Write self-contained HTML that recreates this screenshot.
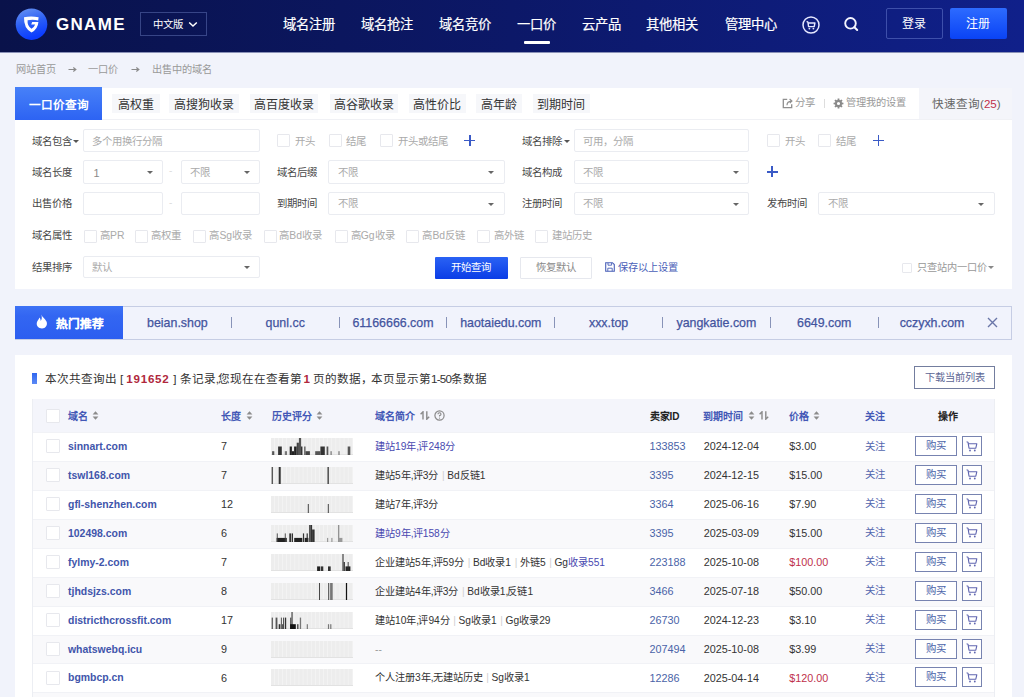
<!DOCTYPE html>
<html lang="zh-CN"><head><meta charset="utf-8"><style>*{box-sizing:border-box;margin:0;padding:0}
html,body{width:1024px;height:697px;overflow:hidden}
body{background:#f1f3fb;font-family:"Liberation Sans",sans-serif;color:#333;position:relative}
.a{position:absolute;white-space:nowrap}
.inp{position:absolute;border:1px solid #eaecf1;background:#fff;border-radius:2px}
.car{position:absolute;width:0;height:0;border-left:3px solid transparent;border-right:3px solid transparent;border-top:3px solid #777}
.cb{position:absolute;width:13px;height:13px;border:1px solid #e7e8ed;background:#fff;border-radius:1px}
.plus{position:absolute;width:11px;height:11px}
.plus:before{content:"";position:absolute;left:0;top:4.6px;width:11px;height:1.8px;background:#3a5ac6}
.plus:after{content:"";position:absolute;left:4.6px;top:0;width:1.8px;height:11px;background:#3a5ac6}
i{font-style:normal;color:#d0d0d0;margin:0 2.6px 0 3.6px}.cm{margin-right:-0.8px}</style></head><body>
<div class="a" style="left:0px;top:0px;width:1024px;height:52px;background:linear-gradient(90deg,#09124a 0%,#0c1868 50%,#10208a 100%)"></div>
<div class="a" style="left:0px;top:52px;width:1024px;height:1px;background:rgba(14,26,100,0.45)"></div>
<svg class="a" style="left:15px;top:8px" width="33" height="33" viewBox="0 0 33 33">
<defs><linearGradient id="lg" x1="0" y1="0" x2="0.3" y2="1"><stop offset="0" stop-color="#6d97f2"/><stop offset="0.55" stop-color="#2a5ef5"/><stop offset="1" stop-color="#0b3cff"/></linearGradient></defs>
<circle cx="16.5" cy="16.2" r="15.8" fill="url(#lg)"/>
<path d="M9 9.3 Q16 7.6 23.6 9.3 L23.2 12.4 Q18 11.2 12.6 12.2 Q12 17.6 16.5 20.8 Q19.6 18.6 20.2 16.6 L16.2 16.6 L17.2 14 L23.4 14 Q23 20.8 16.5 24.6 Q8.6 20.4 9 9.3 Z" fill="#fff"/>
</svg>
<div class="a" style="left:56px;top:15px;font-size:17px;font-weight:bold;color:#fff;letter-spacing:1.3px;line-height:20px">GNAME</div>
<div class="a" style="left:140px;top:12px;width:67px;height:24px;border:1px solid rgba(140,160,230,0.35)"></div>
<div class="a" style="left:153px;top:19.5px;font-size:10.4px;line-height:10.4px;color:#fff;font-weight:normal;">中文版</div>
<svg class="a" style="left:188px;top:21px" width="10" height="7" viewBox="0 0 10 7"><path d="M1.2 1.5 L5 5 L8.8 1.5" stroke="#fff" stroke-width="1.5" fill="none"/></svg>
<div class="a" style="left:283px;top:18px;font-size:13.3px;line-height:13.3px;color:#fff;font-weight:normal;-webkit-text-stroke:0.2px #fff">域名注册</div>
<div class="a" style="left:361px;top:18px;font-size:13.3px;line-height:13.3px;color:#fff;font-weight:normal;-webkit-text-stroke:0.2px #fff">域名抢注</div>
<div class="a" style="left:439px;top:18px;font-size:13.3px;line-height:13.3px;color:#fff;font-weight:normal;-webkit-text-stroke:0.2px #fff">域名竞价</div>
<div class="a" style="left:516.5px;top:18px;font-size:13.3px;line-height:13.3px;color:#fff;font-weight:normal;-webkit-text-stroke:0.2px #fff">一口价</div>
<div class="a" style="left:581.7px;top:18px;font-size:13.3px;line-height:13.3px;color:#fff;font-weight:normal;-webkit-text-stroke:0.2px #fff">云产品</div>
<div class="a" style="left:646px;top:18px;font-size:13.3px;line-height:13.3px;color:#fff;font-weight:normal;-webkit-text-stroke:0.2px #fff">其他相关</div>
<div class="a" style="left:724.7px;top:18px;font-size:13.3px;line-height:13.3px;color:#fff;font-weight:normal;-webkit-text-stroke:0.2px #fff">管理中心</div>
<div class="a" style="left:524px;top:41px;width:26px;height:3px;background:#fff;border-radius:1px"></div>
<svg class="a" style="left:801px;top:15px" width="20" height="20" viewBox="0 0 20 20"><circle cx="10" cy="10" r="8" stroke="#e6e8ff" stroke-width="1.5" fill="none"/><path d="M5.6 6.4 L6.9 7.2 L7.6 11.6 H13.2 L13.9 8 H7.2" stroke="#e6e8ff" stroke-width="1.4" fill="none" stroke-linejoin="round"/><circle cx="8.4" cy="13.6" r="0.9" fill="#e6e8ff"/><circle cx="12.4" cy="13.6" r="0.9" fill="#e6e8ff"/></svg>
<svg class="a" style="left:843px;top:16px" width="18" height="18" viewBox="0 0 18 18"><circle cx="7.5" cy="7.3" r="5.3" stroke="#f4f5ff" stroke-width="1.9" fill="none"/><path d="M11.4 11.2 L14.2 14" stroke="#f4f5ff" stroke-width="2" stroke-linecap="round"/></svg>
<div class="a" style="left:886px;top:8px;width:57px;height:31px;border:1px solid rgba(120,140,220,0.45);border-radius:2px"></div>
<div class="a" style="left:902px;top:18px;font-size:12px;line-height:12px;color:#fff;font-weight:normal;">登录</div>
<div class="a" style="left:950px;top:8px;width:57px;height:31px;background:linear-gradient(180deg,#2d6bff,#0a43f5);border-radius:2px"></div>
<div class="a" style="left:966px;top:18px;font-size:12px;line-height:12px;color:#fff;font-weight:normal;">注册</div>
<div class="a" style="left:15.5px;top:65px;font-size:10.2px;line-height:10.2px;color:#999;font-weight:normal;">网站首页</div>
<svg class="a" style="left:68px;top:66px" width="9" height="7" viewBox="0 0 9 7"><path d="M0.5 3.5 H7.5 M5.3 1.6 L7.8 3.5 L5.3 5.4" stroke="#8a8a8a" stroke-width="1.2" fill="none"/></svg>
<div class="a" style="left:88px;top:65px;font-size:10.2px;line-height:10.2px;color:#999;font-weight:normal;">一口价</div>
<svg class="a" style="left:131px;top:66px" width="9" height="7" viewBox="0 0 9 7"><path d="M0.5 3.5 H7.5 M5.3 1.6 L7.8 3.5 L5.3 5.4" stroke="#8a8a8a" stroke-width="1.2" fill="none"/></svg>
<div class="a" style="left:151.5px;top:65px;font-size:10.2px;line-height:10.2px;color:#999;font-weight:normal;">出售中的域名</div>
<div class="a" style="left:15px;top:88px;width:997px;height:201px;background:#fff"></div>
<div class="a" style="left:15px;top:119px;width:997px;height:1px;background:#f0f1f5"></div>
<div class="a" style="left:15px;top:87px;width:87px;height:33px;background:linear-gradient(180deg,#4781f8,#2d63f3)"></div>
<div class="a" style="left:29.3px;top:99px;font-size:11.6px;line-height:11.6px;color:#fff;font-weight:bold;">一口价查询</div>
<div class="a" style="left:112px;top:94px;width:48px;height:19px;background:#f6f7fa"></div>
<div class="a" style="left:118.0px;top:98.5px;font-size:12px;line-height:12px;color:#333;font-weight:normal;">高权重</div>
<div class="a" style="left:169px;top:94px;width:70px;height:19px;background:#f6f7fa"></div>
<div class="a" style="left:174.0px;top:98.5px;font-size:12px;line-height:12px;color:#333;font-weight:normal;">高搜狗收录</div>
<div class="a" style="left:250px;top:94px;width:68px;height:19px;background:#f6f7fa"></div>
<div class="a" style="left:254.0px;top:98.5px;font-size:12px;line-height:12px;color:#333;font-weight:normal;">高百度收录</div>
<div class="a" style="left:330px;top:94px;width:68px;height:19px;background:#f6f7fa"></div>
<div class="a" style="left:334.0px;top:98.5px;font-size:12px;line-height:12px;color:#333;font-weight:normal;">高谷歌收录</div>
<div class="a" style="left:408.6px;top:94px;width:57.39999999999998px;height:19px;background:#f6f7fa"></div>
<div class="a" style="left:413.3px;top:98.5px;font-size:12px;line-height:12px;color:#333;font-weight:normal;">高性价比</div>
<div class="a" style="left:476.4px;top:94px;width:45.60000000000002px;height:19px;background:#f6f7fa"></div>
<div class="a" style="left:481.2px;top:98.5px;font-size:12px;line-height:12px;color:#333;font-weight:normal;">高年龄</div>
<div class="a" style="left:532.6px;top:94px;width:57.39999999999998px;height:19px;background:#f6f7fa"></div>
<div class="a" style="left:537.3px;top:98.5px;font-size:12px;line-height:12px;color:#333;font-weight:normal;">到期时间</div>
<svg class="a" style="left:781.5px;top:97.5px" width="12" height="11" viewBox="0 0 12 11"><path d="M5.2 1.3 H1.3 V9.7 H9.7 V6.2" stroke="#8f8f8f" stroke-width="1.3" fill="none"/><path d="M5 7.2 Q5 3.3 9.6 3.1 M7.6 1 L9.9 3.1 L7.8 5.2" stroke="#8f8f8f" stroke-width="1.2" fill="none"/></svg>
<div class="a" style="left:795px;top:98px;font-size:10.4px;line-height:10.4px;color:#999;font-weight:normal;">分享</div>
<div class="a" style="left:824px;top:99px;width:1px;height:9px;background:#ddd"></div>
<svg class="a" style="left:833px;top:97.5px" width="11" height="11" viewBox="0 0 11 11"><path d="M8.96 4.51 L10.43 4.65 L10.43 6.35 L8.96 6.49 L8.65 7.24 L9.58 8.39 L8.39 9.58 L7.24 8.65 L6.49 8.96 L6.35 10.43 L4.65 10.43 L4.51 8.96 L3.76 8.65 L2.61 9.58 L1.42 8.39 L2.35 7.24 L2.04 6.49 L0.57 6.35 L0.57 4.65 L2.04 4.51 L2.35 3.76 L1.42 2.61 L2.61 1.42 L3.76 2.35 L4.51 2.04 L4.65 0.57 L6.35 0.57 L6.49 2.04 L7.24 2.35 L8.39 1.42 L9.58 2.61 L8.65 3.76 Z M5.5 3.9 A1.6 1.6 0 1 0 5.5 7.1 A1.6 1.6 0 1 0 5.5 3.9 Z" fill="#8a8a8a" fill-rule="evenodd"/></svg>
<div class="a" style="left:846.4px;top:98px;font-size:10.2px;line-height:10.2px;color:#999;font-weight:normal;">管理我的设置</div>
<div class="a" style="left:919px;top:88px;width:93px;height:31px;background:#f4f5fa"></div>
<div class="a" style="left:932px;top:98px;font-size:11.6px;line-height:11.6px;color:#666">快速查询(<span style="color:#c0304a">25</span>)</div>
<div class="a" style="left:32.4px;top:136.5px;font-size:10.4px;line-height:10.4px;color:#484848;font-weight:normal;">域名包含</div>
<div class="car" style="left:73px;top:140px;border-top-color:#555"></div>
<div class="inp" style="left:83px;top:129px;width:177px;height:23px"></div>
<div class="a" style="left:92px;top:136.5px;font-size:10.4px;line-height:10.4px;color:#aaa;font-weight:normal;">多个用换行分隔</div>
<div class="cb" style="left:277px;top:134px;width:13px;height:13px"></div>
<div class="a" style="left:295px;top:136.5px;font-size:10.4px;line-height:10.4px;color:#aaa;font-weight:normal;">开头</div>
<div class="cb" style="left:328.5px;top:134px;width:13px;height:13px"></div>
<div class="a" style="left:346.3px;top:136.5px;font-size:10.4px;line-height:10.4px;color:#aaa;font-weight:normal;">结尾</div>
<div class="cb" style="left:380px;top:134px;width:13px;height:13px"></div>
<div class="a" style="left:397.8px;top:136.5px;font-size:10.4px;line-height:10.4px;color:#aaa;font-weight:normal;">开头或结尾</div>
<div class="plus" style="left:464.3px;top:135px"></div>
<div class="a" style="left:522px;top:136.5px;font-size:10.4px;line-height:10.4px;color:#484848;font-weight:normal;">域名排除</div>
<div class="car" style="left:563.5px;top:140px;border-top-color:#555"></div>
<div class="inp" style="left:573.5px;top:129px;width:175.5px;height:23px"></div>
<div class="a" style="left:583px;top:136.5px;font-size:10.4px;line-height:10.4px;color:#aaa;font-weight:normal;">可用，分隔</div>
<div class="cb" style="left:766.5px;top:134px;width:13px;height:13px"></div>
<div class="a" style="left:784.8px;top:136.5px;font-size:10.4px;line-height:10.4px;color:#aaa;font-weight:normal;">开头</div>
<div class="cb" style="left:818px;top:134px;width:13px;height:13px"></div>
<div class="a" style="left:835.6px;top:136.5px;font-size:10.4px;line-height:10.4px;color:#aaa;font-weight:normal;">结尾</div>
<div class="plus" style="left:873px;top:135px"></div>
<div class="a" style="left:32.4px;top:167.5px;font-size:10.4px;line-height:10.4px;color:#484848;font-weight:normal;">域名长度</div>
<div class="inp" style="left:83px;top:160px;width:79.5px;height:23.5px"></div>
<div class="a" style="left:93.4px;top:167.5px;font-size:10.8px;line-height:10.8px;color:#888;font-weight:normal;">1</div>
<div class="car" style="left:146.5px;top:171px;border-top-color:#666"></div>
<div class="a" style="left:169px;top:166px;font-size:10px;line-height:10px;color:#ddd;font-weight:normal;">-</div>
<div class="inp" style="left:180.5px;top:160px;width:79.5px;height:23.5px"></div>
<div class="a" style="left:190px;top:167.5px;font-size:10.4px;line-height:10.4px;color:#aaa;font-weight:normal;">不限</div>
<div class="car" style="left:243.5px;top:171px;border-top-color:#666"></div>
<div class="a" style="left:277.3px;top:167.5px;font-size:10.4px;line-height:10.4px;color:#484848;font-weight:normal;">域名后缀</div>
<div class="inp" style="left:328px;top:160px;width:177px;height:23.5px"></div>
<div class="a" style="left:338px;top:167.5px;font-size:10.4px;line-height:10.4px;color:#aaa;font-weight:normal;">不限</div>
<div class="car" style="left:488px;top:171px;border-top-color:#666"></div>
<div class="a" style="left:522px;top:167.5px;font-size:10.4px;line-height:10.4px;color:#484848;font-weight:normal;">域名构成</div>
<div class="inp" style="left:573.5px;top:160px;width:175.5px;height:23.5px"></div>
<div class="a" style="left:583px;top:167.5px;font-size:10.4px;line-height:10.4px;color:#aaa;font-weight:normal;">不限</div>
<div class="car" style="left:732.5px;top:171px;border-top-color:#666"></div>
<div class="plus" style="left:766.6px;top:166.3px"></div>
<div class="a" style="left:32.4px;top:199px;font-size:10.4px;line-height:10.4px;color:#484848;font-weight:normal;">出售价格</div>
<div class="inp" style="left:83px;top:192px;width:79.5px;height:23.19999999999999px"></div>
<div class="a" style="left:169px;top:198px;font-size:10px;line-height:10px;color:#ddd;font-weight:normal;">-</div>
<div class="inp" style="left:180.5px;top:192px;width:79.5px;height:23.19999999999999px"></div>
<div class="a" style="left:277.3px;top:199px;font-size:10.4px;line-height:10.4px;color:#484848;font-weight:normal;">到期时间</div>
<div class="inp" style="left:328px;top:192px;width:177px;height:23.19999999999999px"></div>
<div class="a" style="left:338px;top:199px;font-size:10.4px;line-height:10.4px;color:#aaa;font-weight:normal;">不限</div>
<div class="car" style="left:488px;top:202.5px;border-top-color:#666"></div>
<div class="a" style="left:522px;top:199px;font-size:10.4px;line-height:10.4px;color:#484848;font-weight:normal;">注册时间</div>
<div class="inp" style="left:573.5px;top:192px;width:175.5px;height:23.19999999999999px"></div>
<div class="a" style="left:583px;top:199px;font-size:10.4px;line-height:10.4px;color:#aaa;font-weight:normal;">不限</div>
<div class="car" style="left:732.5px;top:202.5px;border-top-color:#666"></div>
<div class="a" style="left:766.6px;top:199px;font-size:10.4px;line-height:10.4px;color:#484848;font-weight:normal;">发布时间</div>
<div class="inp" style="left:818px;top:192px;width:177px;height:23.19999999999999px"></div>
<div class="a" style="left:828px;top:199px;font-size:10.4px;line-height:10.4px;color:#aaa;font-weight:normal;">不限</div>
<div class="car" style="left:977.5px;top:202.5px;border-top-color:#666"></div>
<div class="a" style="left:32.4px;top:231.2px;font-size:10.4px;line-height:10.4px;color:#484848;font-weight:normal;">域名属性</div>
<div class="cb" style="left:84px;top:229.6px;width:13px;height:13px"></div>
<div class="a" style="left:100px;top:231.2px;font-size:10.4px;line-height:10.4px;color:#aaa;font-weight:normal;">高PR</div>
<div class="cb" style="left:134.7px;top:229.6px;width:13px;height:13px"></div>
<div class="a" style="left:150.8px;top:231.2px;font-size:10.4px;line-height:10.4px;color:#aaa;font-weight:normal;">高权重</div>
<div class="cb" style="left:192.7px;top:229.6px;width:13px;height:13px"></div>
<div class="a" style="left:209.4px;top:231.2px;font-size:10.4px;line-height:10.4px;color:#aaa;font-weight:normal;">高Sg收录</div>
<div class="cb" style="left:263.6px;top:229.6px;width:13px;height:13px"></div>
<div class="a" style="left:279.3px;top:231.2px;font-size:10.4px;line-height:10.4px;color:#aaa;font-weight:normal;">高Bd收录</div>
<div class="cb" style="left:334.5px;top:229.6px;width:13px;height:13px"></div>
<div class="a" style="left:350.7px;top:231.2px;font-size:10.4px;line-height:10.4px;color:#aaa;font-weight:normal;">高Gg收录</div>
<div class="cb" style="left:406px;top:229.6px;width:13px;height:13px"></div>
<div class="a" style="left:422.4px;top:231.2px;font-size:10.4px;line-height:10.4px;color:#aaa;font-weight:normal;">高Bd反链</div>
<div class="cb" style="left:477.3px;top:229.6px;width:13px;height:13px"></div>
<div class="a" style="left:493.8px;top:231.2px;font-size:10.4px;line-height:10.4px;color:#aaa;font-weight:normal;">高外链</div>
<div class="cb" style="left:535.3px;top:229.6px;width:13px;height:13px"></div>
<div class="a" style="left:551.8px;top:231.2px;font-size:10.4px;line-height:10.4px;color:#aaa;font-weight:normal;">建站历史</div>
<div class="a" style="left:32.4px;top:262.5px;font-size:10.4px;line-height:10.4px;color:#484848;font-weight:normal;">结果排序</div>
<div class="inp" style="left:83px;top:256px;width:177px;height:22px"></div>
<div class="a" style="left:92px;top:263px;font-size:10.4px;line-height:10.4px;color:#aaa;font-weight:normal;">默认</div>
<div class="car" style="left:244px;top:266px;border-top-color:#666"></div>
<div class="a" style="left:434.7px;top:256.5px;width:73.30000000000001px;height:22.5px;background:linear-gradient(180deg,#2a62f4,#0b3de6);border-radius:1px"></div>
<div class="a" style="left:451px;top:262.5px;font-size:10.4px;line-height:10.4px;color:#fff;font-weight:normal;">开始查询</div>
<div class="a" style="left:519.5px;top:256.5px;width:72.79999999999995px;height:22.5px;border:1px solid #e6e8ee;background:#fff;border-radius:1px"></div>
<div class="a" style="left:535.5px;top:262.5px;font-size:10.4px;line-height:10.4px;color:#888;font-weight:normal;">恢复默认</div>
<svg class="a" style="left:604.5px;top:262px" width="10" height="10" viewBox="0 0 10 10"><path d="M0.7 0.7 H7.4 L9.3 2.6 V9.3 H0.7 Z" stroke="#4a60b8" stroke-width="1.1" fill="none"/><path d="M3 1 V3.2 H6.6 V1 M2.8 9.2 V6.2 H7.2 V9.2" stroke="#4a60b8" stroke-width="0.9" fill="none"/></svg>
<div class="a" style="left:617.5px;top:262.5px;font-size:10.2px;line-height:10.2px;color:#4a60b8;font-weight:normal;">保存以上设置</div>
<div class="cb" style="left:902.3px;top:262.5px;width:10px;height:10px"></div>
<div class="a" style="left:917px;top:262.5px;font-size:10.2px;line-height:10.2px;color:#999;font-weight:normal;">只查站内一口价</div>
<div class="car" style="left:988px;top:266px;border-top-color:#888"></div>
<div class="a" style="left:15px;top:306px;width:997px;height:34px;background:#f1f3fc;border:1px solid #c6cde4"></div>
<div class="a" style="left:15px;top:306px;width:108px;height:33px;background:linear-gradient(180deg,#3d72f5 0%,#3366f2 30%,#2c5ef0 100%)"></div>
<svg class="a" style="left:36px;top:314px" width="12" height="15" viewBox="0 0 12 15"><path d="M5.2 0.5 C6 3 9 4.5 10.5 7.5 C12 11 9.5 14.5 6 14.5 C2.5 14.5 0.3 12 0.8 8.8 C1.2 6.5 3 5.5 3.5 3.5 C4.5 5 4.8 6 4.6 7 C6 5.5 6.2 3 5.2 0.5 Z" fill="#fff"/></svg>
<div class="a" style="left:56.4px;top:317.5px;font-size:11.6px;line-height:11.6px;color:#fff;font-weight:bold;-webkit-text-stroke:0.2px #fff">热门推荐</div>
<div class="a" style="left:123.5px;top:316px;width:107.8px;text-align:center;font-size:12.4px;line-height:14px;color:#43549e;-webkit-text-stroke:0.25px #43549e">beian.shop</div>
<div class="a" style="left:230.8px;top:317px;width:1.0px;height:11px;background:#8893b8"></div>
<div class="a" style="left:231.3px;top:316px;width:107.8px;text-align:center;font-size:12.4px;line-height:14px;color:#43549e;-webkit-text-stroke:0.25px #43549e">qunl.cc</div>
<div class="a" style="left:338.6px;top:317px;width:1.0px;height:11px;background:#8893b8"></div>
<div class="a" style="left:339.1px;top:316px;width:107.8px;text-align:center;font-size:12.4px;line-height:14px;color:#43549e;-webkit-text-stroke:0.25px #43549e">61166666.com</div>
<div class="a" style="left:446.4px;top:317px;width:1.0px;height:11px;background:#8893b8"></div>
<div class="a" style="left:446.9px;top:316px;width:107.8px;text-align:center;font-size:12.4px;line-height:14px;color:#43549e;-webkit-text-stroke:0.25px #43549e">haotaiedu.com</div>
<div class="a" style="left:554.2px;top:317px;width:1.0px;height:11px;background:#8893b8"></div>
<div class="a" style="left:554.7px;top:316px;width:107.8px;text-align:center;font-size:12.4px;line-height:14px;color:#43549e;-webkit-text-stroke:0.25px #43549e">xxx.top</div>
<div class="a" style="left:662.0px;top:317px;width:1.0px;height:11px;background:#8893b8"></div>
<div class="a" style="left:662.5px;top:316px;width:107.8px;text-align:center;font-size:12.4px;line-height:14px;color:#43549e;-webkit-text-stroke:0.25px #43549e">yangkatie.com</div>
<div class="a" style="left:769.8px;top:317px;width:1.0px;height:11px;background:#8893b8"></div>
<div class="a" style="left:770.3px;top:316px;width:107.8px;text-align:center;font-size:12.4px;line-height:14px;color:#43549e;-webkit-text-stroke:0.25px #43549e">6649.com</div>
<div class="a" style="left:877.6px;top:317px;width:1.0px;height:11px;background:#8893b8"></div>
<div class="a" style="left:878.1px;top:316px;width:107.8px;text-align:center;font-size:12.4px;line-height:14px;color:#43549e;-webkit-text-stroke:0.25px #43549e">cczyxh.com</div>
<svg class="a" style="left:987px;top:317px" width="11" height="11" viewBox="0 0 11 11"><path d="M1 1 L10 10 M10 1 L1 10" stroke="#6a76a8" stroke-width="1.4"/></svg>
<div class="a" style="left:15px;top:355px;width:997px;height:342px;background:#fff"></div>
<div class="a" style="left:32px;top:373px;width:4.600000000000001px;height:11px;background:linear-gradient(180deg,#2f66f0,#5c8af5)"></div>
<div class="a" style="left:45.4px;top:372.5px;font-size:11.6px;line-height:11.6px;color:#333;font-weight:normal;">本次共查询出</div>
<div class="a" style="left:120px;top:372.5px;font-size:11.6px;line-height:11.6px;color:#333;font-weight:normal;">[</div>
<div class="a" style="left:126.3px;top:372.5px;font-size:11.6px;line-height:11.6px;color:#b0283c;font-weight:bold;letter-spacing:0.75px">191652</div>
<div class="a" style="left:173.2px;top:372.5px;font-size:11.6px;line-height:11.6px;color:#333;font-weight:normal;">]</div>
<div class="a" style="left:179.7px;top:372.5px;font-size:11.6px;line-height:11.6px;color:#333;font-weight:normal;">条记录<span style="margin-right:-0.9px">,</span>您现在在查看第</div>
<div class="a" style="left:303.4px;top:372.5px;font-size:11.6px;line-height:11.6px;color:#b0283c;font-weight:bold;">1</div>
<div class="a" style="left:313.4px;top:372.5px;font-size:11.6px;line-height:11.6px;color:#333;font-weight:normal;">页的数据<span style="margin-right:-2.5px">，</span>本页显示第<span style="letter-spacing:-0.7px">1-50</span>条数据</div>
<div class="a" style="left:914px;top:366px;width:81px;height:22.5px;border:1px solid #737d9e;background:#fff"></div>
<div class="a" style="left:925px;top:372.8px;font-size:10.2px;line-height:10.2px;color:#5b6594;font-weight:normal;">下载当前列表</div>
<div class="a" style="left:32px;top:399px;width:963px;height:33px;background:#f4f5fb"></div>
<div class="cb" style="left:45.6px;top:408.5px;width:14px;height:14px"></div>
<div class="a" style="left:67.6px;top:411.6px;font-size:10px;line-height:10px;color:#4358b6;font-weight:bold;">域名</div>
<svg class="a" style="left:92px;top:411px" width="7" height="9" viewBox="0 0 7 9"><path d="M3.5 0.3 L6.4 3.4 H0.6 Z M3.5 8.7 L6.4 5.6 H0.6 Z" fill="#8c8c8c"/></svg>
<div class="a" style="left:221.2px;top:411.6px;font-size:10px;line-height:10px;color:#4358b6;font-weight:bold;">长度</div>
<svg class="a" style="left:245.5px;top:411px" width="7" height="9" viewBox="0 0 7 9"><path d="M3.5 0.3 L6.4 3.4 H0.6 Z M3.5 8.7 L6.4 5.6 H0.6 Z" fill="#8c8c8c"/></svg>
<div class="a" style="left:271.7px;top:411.6px;font-size:10px;line-height:10px;color:#4358b6;font-weight:bold;">历史评分</div>
<svg class="a" style="left:316px;top:411px" width="7" height="9" viewBox="0 0 7 9"><path d="M3.5 0.3 L6.4 3.4 H0.6 Z M3.5 8.7 L6.4 5.6 H0.6 Z" fill="#8c8c8c"/></svg>
<div class="a" style="left:375px;top:411.6px;font-size:10px;line-height:10px;color:#4358b6;font-weight:bold;">域名简介</div>
<svg class="a" style="left:419.5px;top:411px" width="10" height="9" viewBox="0 0 10 9"><path d="M3 8.5 V0.8 L0.6 3.2 M6.8 0.3 V8.2 L9.2 5.8" stroke="#8a8a8a" stroke-width="1.4" fill="none"/></svg>
<svg class="a" style="left:434px;top:410px" width="11" height="11" viewBox="0 0 11 11"><circle cx="5.5" cy="5.5" r="4.6" stroke="#8a8a8a" stroke-width="1.2" fill="none"/><path d="M4 4.3 Q4 2.8 5.5 2.8 Q7 2.8 7 4.2 Q7 5.2 5.5 5.6 V6.6" stroke="#8a8a8a" stroke-width="1.1" fill="none"/><circle cx="5.5" cy="8.1" r="0.7" fill="#8a8a8a"/></svg>
<div class="a" style="left:649.6px;top:411.6px;font-size:10px;line-height:10px;color:#222;font-weight:bold;">卖家ID</div>
<div class="a" style="left:702.8px;top:411.6px;font-size:10px;line-height:10px;color:#4358b6;font-weight:bold;">到期时间</div>
<svg class="a" style="left:747.5px;top:411px" width="7" height="9" viewBox="0 0 7 9"><path d="M3.5 0.3 L6.4 3.4 H0.6 Z M3.5 8.7 L6.4 5.6 H0.6 Z" fill="#8c8c8c"/></svg>
<svg class="a" style="left:759px;top:411px" width="10" height="9" viewBox="0 0 10 9"><path d="M3 8.5 V0.8 L0.6 3.2 M6.8 0.3 V8.2 L9.2 5.8" stroke="#8a8a8a" stroke-width="1.4" fill="none"/></svg>
<div class="a" style="left:788.8px;top:411.6px;font-size:10px;line-height:10px;color:#4358b6;font-weight:bold;">价格</div>
<svg class="a" style="left:812.5px;top:411px" width="7" height="9" viewBox="0 0 7 9"><path d="M3.5 0.3 L6.4 3.4 H0.6 Z M3.5 8.7 L6.4 5.6 H0.6 Z" fill="#8c8c8c"/></svg>
<div class="a" style="left:865.4px;top:411.6px;font-size:10px;line-height:10px;color:#4358b6;font-weight:bold;">关注</div>
<div class="a" style="left:937.5px;top:411.6px;font-size:10px;line-height:10px;color:#222;font-weight:bold;">操作</div>
<div class="a" style="left:32px;top:432.0px;width:963px;height:29.0px;background:#fff;border-top:1px solid #f1f2f6"></div>
<div class="cb" style="left:45.6px;top:439.2px;width:14px;height:14px"></div>
<div class="a" style="left:68px;top:442.0px;font-size:10.45px;line-height:10.45px;color:#4155ab;font-weight:bold;">sinnart.com</div>
<div class="a" style="left:221px;top:441.2px;font-size:10.8px;line-height:10.8px;color:#333;font-weight:normal;">7</div>
<svg class="a" style="left:271.2px;top:438.0px" width="82" height="17" viewBox="0 0 82 17"><rect x="0" y="0" width="82" height="17" fill="#ededed"/><rect x="3.0" y="0" width="0.7" height="17" fill="#f5f5f5"/><rect x="7.1" y="0" width="0.7" height="17" fill="#f5f5f5"/><rect x="11.2" y="0" width="0.7" height="17" fill="#f5f5f5"/><rect x="15.299999999999999" y="0" width="0.7" height="17" fill="#f5f5f5"/><rect x="19.4" y="0" width="0.7" height="17" fill="#f5f5f5"/><rect x="23.5" y="0" width="0.7" height="17" fill="#f5f5f5"/><rect x="27.599999999999998" y="0" width="0.7" height="17" fill="#f5f5f5"/><rect x="31.699999999999996" y="0" width="0.7" height="17" fill="#f5f5f5"/><rect x="35.8" y="0" width="0.7" height="17" fill="#f5f5f5"/><rect x="39.9" y="0" width="0.7" height="17" fill="#f5f5f5"/><rect x="44.0" y="0" width="0.7" height="17" fill="#f5f5f5"/><rect x="48.099999999999994" y="0" width="0.7" height="17" fill="#f5f5f5"/><rect x="52.199999999999996" y="0" width="0.7" height="17" fill="#f5f5f5"/><rect x="56.3" y="0" width="0.7" height="17" fill="#f5f5f5"/><rect x="60.39999999999999" y="0" width="0.7" height="17" fill="#f5f5f5"/><rect x="64.5" y="0" width="0.7" height="17" fill="#f5f5f5"/><rect x="68.6" y="0" width="0.7" height="17" fill="#f5f5f5"/><rect x="72.69999999999999" y="0" width="0.7" height="17" fill="#f5f5f5"/><rect x="76.8" y="0" width="0.7" height="17" fill="#f5f5f5"/><rect x="80.89999999999999" y="0" width="0.7" height="17" fill="#f5f5f5"/><rect x="0" y="16" width="82" height="1" fill="#e2e2e2"/><rect x="1.1" y="13.2" width="2.2" height="3.8" fill="#555"/><rect x="7.1" y="8.5" width="3.7" height="8.5" fill="#333"/><rect x="13.8" y="13.2" width="2.2" height="3.8" fill="#777"/><rect x="18.7" y="8.5" width="2.2" height="8.5" fill="#222"/><rect x="20.9" y="13.2" width="2.2" height="3.8" fill="#222"/><rect x="23.1" y="8.5" width="2.6" height="8.5" fill="#222"/><rect x="25.7" y="4.699999999999999" width="2.2" height="12.3" fill="#444"/><rect x="27.9" y="0" width="2.2" height="17" fill="#555"/><rect x="30.1" y="8.5" width="1.3" height="8.5" fill="#222"/><rect x="33.2" y="8.5" width="1.3" height="8.5" fill="#555"/><rect x="34.5" y="13.2" width="4.4" height="3.8" fill="#444"/><rect x="44.2" y="13.2" width="5.2" height="3.8" fill="#555"/><rect x="49.4" y="8.5" width="4.4" height="8.5" fill="#333"/><rect x="55.6" y="8.5" width="1.7" height="8.5" fill="#555"/><rect x="59.5" y="13.2" width="1.2" height="3.8" fill="#777"/><rect x="67.4" y="13.2" width="1.2" height="3.8" fill="#777"/><rect x="76.7" y="8.5" width="2.6" height="8.5" fill="#555"/></svg>
<div class="a" style="left:375px;top:442.0px;font-size:10.2px;line-height:10.2px;color:#333"><span style="color:#4848b0">建站19年<span class="cm">,</span>评248分</span></div>
<div class="a" style="left:649.4px;top:441.2px;font-size:10.8px;line-height:10.8px;color:#4a63a8;font-weight:normal;">133853</div>
<div class="a" style="left:703.7px;top:441.2px;font-size:10.8px;line-height:10.8px;color:#333;font-weight:normal;">2024-12-04</div>
<div class="a" style="left:789.2px;top:441.2px;font-size:10.8px;line-height:10.8px;color:#333;font-weight:normal;">$3.00</div>
<div class="a" style="left:865px;top:441.5px;font-size:10.4px;line-height:10.4px;color:#5266ae;font-weight:normal;">关注</div>
<div class="a" style="left:915px;top:436.0px;width:42px;height:20.0px;border:1px solid #7783b0;background:#fff"></div>
<div class="a" style="left:926px;top:441.0px;font-size:10.4px;line-height:10.4px;color:#4a63a8;font-weight:normal;">购买</div>
<div class="a" style="left:962px;top:436.0px;width:20px;height:20.0px;border:1px solid #7783b0;background:#fff"></div>
<svg class="a" style="left:966px;top:440.5px" width="12" height="11" viewBox="0 0 12 11"><path d="M0.6 0.8 L2 1.2 L3 7.2 H9.8 L10.8 2.8 H2.6" stroke="#6066b0" stroke-width="1.1" fill="none" stroke-linejoin="round"/><circle cx="4" cy="9.5" r="0.9" fill="#6066b0"/><circle cx="8.8" cy="9.5" r="0.9" fill="#6066b0"/></svg>
<div class="a" style="left:32px;top:460.93px;width:963px;height:29.0px;background:#f9f9fb;border-top:1px solid #f1f2f6"></div>
<div class="cb" style="left:45.6px;top:468.13px;width:14px;height:14px"></div>
<div class="a" style="left:68px;top:470.93px;font-size:10.45px;line-height:10.45px;color:#4155ab;font-weight:bold;">tswl168.com</div>
<div class="a" style="left:221px;top:470.13px;font-size:10.8px;line-height:10.8px;color:#333;font-weight:normal;">7</div>
<svg class="a" style="left:271.2px;top:466.93px" width="82" height="17" viewBox="0 0 82 17"><rect x="0" y="0" width="82" height="17" fill="#ededed"/><rect x="3.0" y="0" width="0.7" height="17" fill="#f5f5f5"/><rect x="7.1" y="0" width="0.7" height="17" fill="#f5f5f5"/><rect x="11.2" y="0" width="0.7" height="17" fill="#f5f5f5"/><rect x="15.299999999999999" y="0" width="0.7" height="17" fill="#f5f5f5"/><rect x="19.4" y="0" width="0.7" height="17" fill="#f5f5f5"/><rect x="23.5" y="0" width="0.7" height="17" fill="#f5f5f5"/><rect x="27.599999999999998" y="0" width="0.7" height="17" fill="#f5f5f5"/><rect x="31.699999999999996" y="0" width="0.7" height="17" fill="#f5f5f5"/><rect x="35.8" y="0" width="0.7" height="17" fill="#f5f5f5"/><rect x="39.9" y="0" width="0.7" height="17" fill="#f5f5f5"/><rect x="44.0" y="0" width="0.7" height="17" fill="#f5f5f5"/><rect x="48.099999999999994" y="0" width="0.7" height="17" fill="#f5f5f5"/><rect x="52.199999999999996" y="0" width="0.7" height="17" fill="#f5f5f5"/><rect x="56.3" y="0" width="0.7" height="17" fill="#f5f5f5"/><rect x="60.39999999999999" y="0" width="0.7" height="17" fill="#f5f5f5"/><rect x="64.5" y="0" width="0.7" height="17" fill="#f5f5f5"/><rect x="68.6" y="0" width="0.7" height="17" fill="#f5f5f5"/><rect x="72.69999999999999" y="0" width="0.7" height="17" fill="#f5f5f5"/><rect x="76.8" y="0" width="0.7" height="17" fill="#f5f5f5"/><rect x="80.89999999999999" y="0" width="0.7" height="17" fill="#f5f5f5"/><rect x="0" y="16" width="82" height="1" fill="#e2e2e2"/><rect x="0.7" y="0" width="1.1" height="17" fill="#333"/><rect x="7.7" y="0" width="2" height="17" fill="#333"/><rect x="56.5" y="0" width="1.3" height="17" fill="#333"/></svg>
<div class="a" style="left:375px;top:470.93px;font-size:10.2px;line-height:10.2px;color:#333">建站5年<span class="cm">,</span>评3分<i>|</i>Bd反链1</div>
<div class="a" style="left:649.4px;top:470.13px;font-size:10.8px;line-height:10.8px;color:#4a63a8;font-weight:normal;">3395</div>
<div class="a" style="left:703.7px;top:470.13px;font-size:10.8px;line-height:10.8px;color:#333;font-weight:normal;">2024-12-15</div>
<div class="a" style="left:789.2px;top:470.13px;font-size:10.8px;line-height:10.8px;color:#333;font-weight:normal;">$15.00</div>
<div class="a" style="left:865px;top:470.43px;font-size:10.4px;line-height:10.4px;color:#5266ae;font-weight:normal;">关注</div>
<div class="a" style="left:915px;top:464.93px;width:42px;height:20.0px;border:1px solid #7783b0;background:#fff"></div>
<div class="a" style="left:926px;top:469.93px;font-size:10.4px;line-height:10.4px;color:#4a63a8;font-weight:normal;">购买</div>
<div class="a" style="left:962px;top:464.93px;width:20px;height:20.0px;border:1px solid #7783b0;background:#fff"></div>
<svg class="a" style="left:966px;top:469.43px" width="12" height="11" viewBox="0 0 12 11"><path d="M0.6 0.8 L2 1.2 L3 7.2 H9.8 L10.8 2.8 H2.6" stroke="#6066b0" stroke-width="1.1" fill="none" stroke-linejoin="round"/><circle cx="4" cy="9.5" r="0.9" fill="#6066b0"/><circle cx="8.8" cy="9.5" r="0.9" fill="#6066b0"/></svg>
<div class="a" style="left:32px;top:489.86px;width:963px;height:29.0px;background:#fff;border-top:1px solid #f1f2f6"></div>
<div class="cb" style="left:45.6px;top:497.06px;width:14px;height:14px"></div>
<div class="a" style="left:68px;top:499.86px;font-size:10.45px;line-height:10.45px;color:#4155ab;font-weight:bold;">gfl-shenzhen.com</div>
<div class="a" style="left:221px;top:499.06px;font-size:10.8px;line-height:10.8px;color:#333;font-weight:normal;">12</div>
<svg class="a" style="left:271.2px;top:495.86px" width="82" height="17" viewBox="0 0 82 17"><rect x="0" y="0" width="82" height="17" fill="#ededed"/><rect x="3.0" y="0" width="0.7" height="17" fill="#f5f5f5"/><rect x="7.1" y="0" width="0.7" height="17" fill="#f5f5f5"/><rect x="11.2" y="0" width="0.7" height="17" fill="#f5f5f5"/><rect x="15.299999999999999" y="0" width="0.7" height="17" fill="#f5f5f5"/><rect x="19.4" y="0" width="0.7" height="17" fill="#f5f5f5"/><rect x="23.5" y="0" width="0.7" height="17" fill="#f5f5f5"/><rect x="27.599999999999998" y="0" width="0.7" height="17" fill="#f5f5f5"/><rect x="31.699999999999996" y="0" width="0.7" height="17" fill="#f5f5f5"/><rect x="35.8" y="0" width="0.7" height="17" fill="#f5f5f5"/><rect x="39.9" y="0" width="0.7" height="17" fill="#f5f5f5"/><rect x="44.0" y="0" width="0.7" height="17" fill="#f5f5f5"/><rect x="48.099999999999994" y="0" width="0.7" height="17" fill="#f5f5f5"/><rect x="52.199999999999996" y="0" width="0.7" height="17" fill="#f5f5f5"/><rect x="56.3" y="0" width="0.7" height="17" fill="#f5f5f5"/><rect x="60.39999999999999" y="0" width="0.7" height="17" fill="#f5f5f5"/><rect x="64.5" y="0" width="0.7" height="17" fill="#f5f5f5"/><rect x="68.6" y="0" width="0.7" height="17" fill="#f5f5f5"/><rect x="72.69999999999999" y="0" width="0.7" height="17" fill="#f5f5f5"/><rect x="76.8" y="0" width="0.7" height="17" fill="#f5f5f5"/><rect x="80.89999999999999" y="0" width="0.7" height="17" fill="#f5f5f5"/><rect x="0" y="16" width="82" height="1" fill="#e2e2e2"/><rect x="36.8" y="8" width="1" height="9" fill="#444"/><rect x="56.8" y="8" width="1" height="9" fill="#444"/></svg>
<div class="a" style="left:375px;top:499.86px;font-size:10.2px;line-height:10.2px;color:#333">建站7年<span class="cm">,</span>评3分</div>
<div class="a" style="left:649.4px;top:499.06px;font-size:10.8px;line-height:10.8px;color:#4a63a8;font-weight:normal;">3364</div>
<div class="a" style="left:703.7px;top:499.06px;font-size:10.8px;line-height:10.8px;color:#333;font-weight:normal;">2025-06-16</div>
<div class="a" style="left:789.2px;top:499.06px;font-size:10.8px;line-height:10.8px;color:#333;font-weight:normal;">$7.90</div>
<div class="a" style="left:865px;top:499.36px;font-size:10.4px;line-height:10.4px;color:#5266ae;font-weight:normal;">关注</div>
<div class="a" style="left:915px;top:493.86px;width:42px;height:20.0px;border:1px solid #7783b0;background:#fff"></div>
<div class="a" style="left:926px;top:498.86px;font-size:10.4px;line-height:10.4px;color:#4a63a8;font-weight:normal;">购买</div>
<div class="a" style="left:962px;top:493.86px;width:20px;height:20.0px;border:1px solid #7783b0;background:#fff"></div>
<svg class="a" style="left:966px;top:498.36px" width="12" height="11" viewBox="0 0 12 11"><path d="M0.6 0.8 L2 1.2 L3 7.2 H9.8 L10.8 2.8 H2.6" stroke="#6066b0" stroke-width="1.1" fill="none" stroke-linejoin="round"/><circle cx="4" cy="9.5" r="0.9" fill="#6066b0"/><circle cx="8.8" cy="9.5" r="0.9" fill="#6066b0"/></svg>
<div class="a" style="left:32px;top:518.79px;width:963px;height:29.0px;background:#f9f9fb;border-top:1px solid #f1f2f6"></div>
<div class="cb" style="left:45.6px;top:525.99px;width:14px;height:14px"></div>
<div class="a" style="left:68px;top:528.79px;font-size:10.45px;line-height:10.45px;color:#4155ab;font-weight:bold;">102498.com</div>
<div class="a" style="left:221px;top:527.99px;font-size:10.8px;line-height:10.8px;color:#333;font-weight:normal;">6</div>
<svg class="a" style="left:271.2px;top:524.79px" width="82" height="17" viewBox="0 0 82 17"><rect x="0" y="0" width="82" height="17" fill="#ededed"/><rect x="3.0" y="0" width="0.7" height="17" fill="#f5f5f5"/><rect x="7.1" y="0" width="0.7" height="17" fill="#f5f5f5"/><rect x="11.2" y="0" width="0.7" height="17" fill="#f5f5f5"/><rect x="15.299999999999999" y="0" width="0.7" height="17" fill="#f5f5f5"/><rect x="19.4" y="0" width="0.7" height="17" fill="#f5f5f5"/><rect x="23.5" y="0" width="0.7" height="17" fill="#f5f5f5"/><rect x="27.599999999999998" y="0" width="0.7" height="17" fill="#f5f5f5"/><rect x="31.699999999999996" y="0" width="0.7" height="17" fill="#f5f5f5"/><rect x="35.8" y="0" width="0.7" height="17" fill="#f5f5f5"/><rect x="39.9" y="0" width="0.7" height="17" fill="#f5f5f5"/><rect x="44.0" y="0" width="0.7" height="17" fill="#f5f5f5"/><rect x="48.099999999999994" y="0" width="0.7" height="17" fill="#f5f5f5"/><rect x="52.199999999999996" y="0" width="0.7" height="17" fill="#f5f5f5"/><rect x="56.3" y="0" width="0.7" height="17" fill="#f5f5f5"/><rect x="60.39999999999999" y="0" width="0.7" height="17" fill="#f5f5f5"/><rect x="64.5" y="0" width="0.7" height="17" fill="#f5f5f5"/><rect x="68.6" y="0" width="0.7" height="17" fill="#f5f5f5"/><rect x="72.69999999999999" y="0" width="0.7" height="17" fill="#f5f5f5"/><rect x="76.8" y="0" width="0.7" height="17" fill="#f5f5f5"/><rect x="80.89999999999999" y="0" width="0.7" height="17" fill="#f5f5f5"/><rect x="0" y="16" width="82" height="1" fill="#e2e2e2"/><rect x="5.6" y="12.9" width="10.2" height="4.1" fill="#222"/><rect x="5.8" y="8.4" width="0.9" height="8.6" fill="#444"/><rect x="13.8" y="8.4" width="0.9" height="8.6" fill="#444"/><rect x="18.3" y="8.4" width="1.9" height="8.6" fill="#333"/><rect x="20.8" y="8.4" width="1.2" height="8.6" fill="#333"/><rect x="23.2" y="12.9" width="8.1" height="4.1" fill="#222"/><rect x="31.9" y="8.4" width="1.2" height="8.6" fill="#333"/><rect x="33.7" y="12.9" width="3.7" height="4.1" fill="#222"/><rect x="35.6" y="8.4" width="1.2" height="8.6" fill="#333"/><rect x="38" y="0" width="1.3" height="17" fill="#555"/><rect x="39.3" y="0" width="1.8" height="17" fill="#333"/><rect x="41.1" y="4.5" width="2.5" height="12.5" fill="#333"/><rect x="56" y="12.9" width="1.2" height="4.1" fill="#999"/><rect x="60.3" y="12.9" width="1.2" height="4.1" fill="#999"/><rect x="67.1" y="0" width="1.2" height="17" fill="#888"/><rect x="67.7" y="12.9" width="3.7" height="4.1" fill="#999"/></svg>
<div class="a" style="left:375px;top:528.79px;font-size:10.2px;line-height:10.2px;color:#333"><span style="color:#4848b0">建站9年<span class="cm">,</span>评158分</span></div>
<div class="a" style="left:649.4px;top:527.99px;font-size:10.8px;line-height:10.8px;color:#4a63a8;font-weight:normal;">3395</div>
<div class="a" style="left:703.7px;top:527.99px;font-size:10.8px;line-height:10.8px;color:#333;font-weight:normal;">2025-03-09</div>
<div class="a" style="left:789.2px;top:527.99px;font-size:10.8px;line-height:10.8px;color:#333;font-weight:normal;">$15.00</div>
<div class="a" style="left:865px;top:528.29px;font-size:10.4px;line-height:10.4px;color:#5266ae;font-weight:normal;">关注</div>
<div class="a" style="left:915px;top:522.79px;width:42px;height:20.0px;border:1px solid #7783b0;background:#fff"></div>
<div class="a" style="left:926px;top:527.79px;font-size:10.4px;line-height:10.4px;color:#4a63a8;font-weight:normal;">购买</div>
<div class="a" style="left:962px;top:522.79px;width:20px;height:20.0px;border:1px solid #7783b0;background:#fff"></div>
<svg class="a" style="left:966px;top:527.29px" width="12" height="11" viewBox="0 0 12 11"><path d="M0.6 0.8 L2 1.2 L3 7.2 H9.8 L10.8 2.8 H2.6" stroke="#6066b0" stroke-width="1.1" fill="none" stroke-linejoin="round"/><circle cx="4" cy="9.5" r="0.9" fill="#6066b0"/><circle cx="8.8" cy="9.5" r="0.9" fill="#6066b0"/></svg>
<div class="a" style="left:32px;top:547.72px;width:963px;height:29.0px;background:#fff;border-top:1px solid #f1f2f6"></div>
<div class="cb" style="left:45.6px;top:554.9200000000001px;width:14px;height:14px"></div>
<div class="a" style="left:68px;top:557.72px;font-size:10.45px;line-height:10.45px;color:#4155ab;font-weight:bold;">fylmy-2.com</div>
<div class="a" style="left:221px;top:556.9200000000001px;font-size:10.8px;line-height:10.8px;color:#333;font-weight:normal;">7</div>
<svg class="a" style="left:271.2px;top:553.72px" width="82" height="17" viewBox="0 0 82 17"><rect x="0" y="0" width="82" height="17" fill="#ededed"/><rect x="3.0" y="0" width="0.7" height="17" fill="#f5f5f5"/><rect x="7.1" y="0" width="0.7" height="17" fill="#f5f5f5"/><rect x="11.2" y="0" width="0.7" height="17" fill="#f5f5f5"/><rect x="15.299999999999999" y="0" width="0.7" height="17" fill="#f5f5f5"/><rect x="19.4" y="0" width="0.7" height="17" fill="#f5f5f5"/><rect x="23.5" y="0" width="0.7" height="17" fill="#f5f5f5"/><rect x="27.599999999999998" y="0" width="0.7" height="17" fill="#f5f5f5"/><rect x="31.699999999999996" y="0" width="0.7" height="17" fill="#f5f5f5"/><rect x="35.8" y="0" width="0.7" height="17" fill="#f5f5f5"/><rect x="39.9" y="0" width="0.7" height="17" fill="#f5f5f5"/><rect x="44.0" y="0" width="0.7" height="17" fill="#f5f5f5"/><rect x="48.099999999999994" y="0" width="0.7" height="17" fill="#f5f5f5"/><rect x="52.199999999999996" y="0" width="0.7" height="17" fill="#f5f5f5"/><rect x="56.3" y="0" width="0.7" height="17" fill="#f5f5f5"/><rect x="60.39999999999999" y="0" width="0.7" height="17" fill="#f5f5f5"/><rect x="64.5" y="0" width="0.7" height="17" fill="#f5f5f5"/><rect x="68.6" y="0" width="0.7" height="17" fill="#f5f5f5"/><rect x="72.69999999999999" y="0" width="0.7" height="17" fill="#f5f5f5"/><rect x="76.8" y="0" width="0.7" height="17" fill="#f5f5f5"/><rect x="80.89999999999999" y="0" width="0.7" height="17" fill="#f5f5f5"/><rect x="0" y="16" width="82" height="1" fill="#e2e2e2"/><rect x="46.1" y="12.4" width="3.1" height="4.6" fill="#222"/><rect x="49.8" y="12.4" width="2.5" height="4.6" fill="#333"/><rect x="57" y="12.4" width="2.7" height="4.6" fill="#333"/><rect x="71.4" y="0" width="1.2" height="17" fill="#444"/><rect x="72.6" y="8" width="1.3" height="9" fill="#333"/><rect x="74.5" y="12.4" width="4.9" height="4.6" fill="#222"/><rect x="76.7" y="8" width="0.9" height="9" fill="#333"/></svg>
<div class="a" style="left:375px;top:557.72px;font-size:10.2px;line-height:10.2px;color:#333">企业建站5年<span class="cm">,</span>评59分<i>|</i>Bd收录1<i>|</i>外链5<i>|</i>Gg<span style="color:#4848b0">收录551</span></div>
<div class="a" style="left:649.4px;top:556.9200000000001px;font-size:10.8px;line-height:10.8px;color:#4a63a8;font-weight:normal;">223188</div>
<div class="a" style="left:703.7px;top:556.9200000000001px;font-size:10.8px;line-height:10.8px;color:#333;font-weight:normal;">2025-10-08</div>
<div class="a" style="left:789.2px;top:556.9200000000001px;font-size:10.8px;line-height:10.8px;color:#c0304a;font-weight:normal;">$100.00</div>
<div class="a" style="left:865px;top:557.22px;font-size:10.4px;line-height:10.4px;color:#5266ae;font-weight:normal;">关注</div>
<div class="a" style="left:915px;top:551.72px;width:42px;height:20.0px;border:1px solid #7783b0;background:#fff"></div>
<div class="a" style="left:926px;top:556.72px;font-size:10.4px;line-height:10.4px;color:#4a63a8;font-weight:normal;">购买</div>
<div class="a" style="left:962px;top:551.72px;width:20px;height:20.0px;border:1px solid #7783b0;background:#fff"></div>
<svg class="a" style="left:966px;top:556.22px" width="12" height="11" viewBox="0 0 12 11"><path d="M0.6 0.8 L2 1.2 L3 7.2 H9.8 L10.8 2.8 H2.6" stroke="#6066b0" stroke-width="1.1" fill="none" stroke-linejoin="round"/><circle cx="4" cy="9.5" r="0.9" fill="#6066b0"/><circle cx="8.8" cy="9.5" r="0.9" fill="#6066b0"/></svg>
<div class="a" style="left:32px;top:576.65px;width:963px;height:29.0px;background:#f9f9fb;border-top:1px solid #f1f2f6"></div>
<div class="cb" style="left:45.6px;top:583.85px;width:14px;height:14px"></div>
<div class="a" style="left:68px;top:586.65px;font-size:10.45px;line-height:10.45px;color:#4155ab;font-weight:bold;">tjhdsjzs.com</div>
<div class="a" style="left:221px;top:585.85px;font-size:10.8px;line-height:10.8px;color:#333;font-weight:normal;">8</div>
<svg class="a" style="left:271.2px;top:582.65px" width="82" height="17" viewBox="0 0 82 17"><rect x="0" y="0" width="82" height="17" fill="#ededed"/><rect x="3.0" y="0" width="0.7" height="17" fill="#f5f5f5"/><rect x="7.1" y="0" width="0.7" height="17" fill="#f5f5f5"/><rect x="11.2" y="0" width="0.7" height="17" fill="#f5f5f5"/><rect x="15.299999999999999" y="0" width="0.7" height="17" fill="#f5f5f5"/><rect x="19.4" y="0" width="0.7" height="17" fill="#f5f5f5"/><rect x="23.5" y="0" width="0.7" height="17" fill="#f5f5f5"/><rect x="27.599999999999998" y="0" width="0.7" height="17" fill="#f5f5f5"/><rect x="31.699999999999996" y="0" width="0.7" height="17" fill="#f5f5f5"/><rect x="35.8" y="0" width="0.7" height="17" fill="#f5f5f5"/><rect x="39.9" y="0" width="0.7" height="17" fill="#f5f5f5"/><rect x="44.0" y="0" width="0.7" height="17" fill="#f5f5f5"/><rect x="48.099999999999994" y="0" width="0.7" height="17" fill="#f5f5f5"/><rect x="52.199999999999996" y="0" width="0.7" height="17" fill="#f5f5f5"/><rect x="56.3" y="0" width="0.7" height="17" fill="#f5f5f5"/><rect x="60.39999999999999" y="0" width="0.7" height="17" fill="#f5f5f5"/><rect x="64.5" y="0" width="0.7" height="17" fill="#f5f5f5"/><rect x="68.6" y="0" width="0.7" height="17" fill="#f5f5f5"/><rect x="72.69999999999999" y="0" width="0.7" height="17" fill="#f5f5f5"/><rect x="76.8" y="0" width="0.7" height="17" fill="#f5f5f5"/><rect x="80.89999999999999" y="0" width="0.7" height="17" fill="#f5f5f5"/><rect x="0" y="16" width="82" height="1" fill="#e2e2e2"/><rect x="48.1" y="0" width="0.9" height="17" fill="#333"/><rect x="57.2" y="0" width="1" height="17" fill="#444"/><rect x="59.1" y="0" width="2.6" height="17" fill="#777"/><rect x="74.9" y="0" width="1.2" height="17" fill="#111"/></svg>
<div class="a" style="left:375px;top:586.65px;font-size:10.2px;line-height:10.2px;color:#333">企业建站4年<span class="cm">,</span>评3分<i>|</i>Bd收录1<span class="cm">,</span>反链1</div>
<div class="a" style="left:649.4px;top:585.85px;font-size:10.8px;line-height:10.8px;color:#4a63a8;font-weight:normal;">3466</div>
<div class="a" style="left:703.7px;top:585.85px;font-size:10.8px;line-height:10.8px;color:#333;font-weight:normal;">2025-07-18</div>
<div class="a" style="left:789.2px;top:585.85px;font-size:10.8px;line-height:10.8px;color:#333;font-weight:normal;">$50.00</div>
<div class="a" style="left:865px;top:586.15px;font-size:10.4px;line-height:10.4px;color:#5266ae;font-weight:normal;">关注</div>
<div class="a" style="left:915px;top:580.65px;width:42px;height:20.0px;border:1px solid #7783b0;background:#fff"></div>
<div class="a" style="left:926px;top:585.65px;font-size:10.4px;line-height:10.4px;color:#4a63a8;font-weight:normal;">购买</div>
<div class="a" style="left:962px;top:580.65px;width:20px;height:20.0px;border:1px solid #7783b0;background:#fff"></div>
<svg class="a" style="left:966px;top:585.15px" width="12" height="11" viewBox="0 0 12 11"><path d="M0.6 0.8 L2 1.2 L3 7.2 H9.8 L10.8 2.8 H2.6" stroke="#6066b0" stroke-width="1.1" fill="none" stroke-linejoin="round"/><circle cx="4" cy="9.5" r="0.9" fill="#6066b0"/><circle cx="8.8" cy="9.5" r="0.9" fill="#6066b0"/></svg>
<div class="a" style="left:32px;top:605.58px;width:963px;height:29.0px;background:#fff;border-top:1px solid #f1f2f6"></div>
<div class="cb" style="left:45.6px;top:612.7800000000001px;width:14px;height:14px"></div>
<div class="a" style="left:68px;top:615.58px;font-size:10.45px;line-height:10.45px;color:#4155ab;font-weight:bold;">districthcrossfit.com</div>
<div class="a" style="left:221px;top:614.7800000000001px;font-size:10.8px;line-height:10.8px;color:#333;font-weight:normal;">17</div>
<svg class="a" style="left:271.2px;top:611.58px" width="82" height="17" viewBox="0 0 82 17"><rect x="0" y="0" width="82" height="17" fill="#ededed"/><rect x="3.0" y="0" width="0.7" height="17" fill="#f5f5f5"/><rect x="7.1" y="0" width="0.7" height="17" fill="#f5f5f5"/><rect x="11.2" y="0" width="0.7" height="17" fill="#f5f5f5"/><rect x="15.299999999999999" y="0" width="0.7" height="17" fill="#f5f5f5"/><rect x="19.4" y="0" width="0.7" height="17" fill="#f5f5f5"/><rect x="23.5" y="0" width="0.7" height="17" fill="#f5f5f5"/><rect x="27.599999999999998" y="0" width="0.7" height="17" fill="#f5f5f5"/><rect x="31.699999999999996" y="0" width="0.7" height="17" fill="#f5f5f5"/><rect x="35.8" y="0" width="0.7" height="17" fill="#f5f5f5"/><rect x="39.9" y="0" width="0.7" height="17" fill="#f5f5f5"/><rect x="44.0" y="0" width="0.7" height="17" fill="#f5f5f5"/><rect x="48.099999999999994" y="0" width="0.7" height="17" fill="#f5f5f5"/><rect x="52.199999999999996" y="0" width="0.7" height="17" fill="#f5f5f5"/><rect x="56.3" y="0" width="0.7" height="17" fill="#f5f5f5"/><rect x="60.39999999999999" y="0" width="0.7" height="17" fill="#f5f5f5"/><rect x="64.5" y="0" width="0.7" height="17" fill="#f5f5f5"/><rect x="68.6" y="0" width="0.7" height="17" fill="#f5f5f5"/><rect x="72.69999999999999" y="0" width="0.7" height="17" fill="#f5f5f5"/><rect x="76.8" y="0" width="0.7" height="17" fill="#f5f5f5"/><rect x="80.89999999999999" y="0" width="0.7" height="17" fill="#f5f5f5"/><rect x="0" y="16" width="82" height="1" fill="#e2e2e2"/><rect x="0.7" y="5.6" width="1.1" height="11.4" fill="#444"/><rect x="4.6" y="5.6" width="1.8" height="11.4" fill="#555"/><rect x="7.7" y="12.2" width="1.7" height="4.8" fill="#333"/><rect x="9.9" y="5.6" width="0.9" height="11.4" fill="#444"/><rect x="11.2" y="12.2" width="1.3" height="4.8" fill="#333"/><rect x="12.1" y="5.6" width="0.9" height="11.4" fill="#444"/><rect x="13.8" y="5.6" width="1.4" height="11.4" fill="#333"/><rect x="19.1" y="5.6" width="1.3" height="11.4" fill="#555"/><rect x="20.4" y="0" width="1.3" height="17" fill="#555"/><rect x="19.1" y="12.2" width="5.7" height="4.8" fill="#111"/><rect x="26.1" y="12.2" width="1.4" height="4.8" fill="#444"/><rect x="28.8" y="5.6" width="1.3" height="11.4" fill="#777"/><rect x="35.8" y="12.2" width="0.9" height="4.8" fill="#555"/><rect x="56.9" y="12.2" width="1.2" height="4.8" fill="#777"/><rect x="59.2" y="12.2" width="1.2" height="4.8" fill="#777"/></svg>
<div class="a" style="left:375px;top:615.58px;font-size:10.2px;line-height:10.2px;color:#333">建站10年<span class="cm">,</span>评94分<i>|</i>Sg收录1<i>|</i>Gg收录29</div>
<div class="a" style="left:649.4px;top:614.7800000000001px;font-size:10.8px;line-height:10.8px;color:#4a63a8;font-weight:normal;">26730</div>
<div class="a" style="left:703.7px;top:614.7800000000001px;font-size:10.8px;line-height:10.8px;color:#333;font-weight:normal;">2024-12-23</div>
<div class="a" style="left:789.2px;top:614.7800000000001px;font-size:10.8px;line-height:10.8px;color:#333;font-weight:normal;">$3.10</div>
<div class="a" style="left:865px;top:615.08px;font-size:10.4px;line-height:10.4px;color:#5266ae;font-weight:normal;">关注</div>
<div class="a" style="left:915px;top:609.58px;width:42px;height:20.0px;border:1px solid #7783b0;background:#fff"></div>
<div class="a" style="left:926px;top:614.58px;font-size:10.4px;line-height:10.4px;color:#4a63a8;font-weight:normal;">购买</div>
<div class="a" style="left:962px;top:609.58px;width:20px;height:20.0px;border:1px solid #7783b0;background:#fff"></div>
<svg class="a" style="left:966px;top:614.08px" width="12" height="11" viewBox="0 0 12 11"><path d="M0.6 0.8 L2 1.2 L3 7.2 H9.8 L10.8 2.8 H2.6" stroke="#6066b0" stroke-width="1.1" fill="none" stroke-linejoin="round"/><circle cx="4" cy="9.5" r="0.9" fill="#6066b0"/><circle cx="8.8" cy="9.5" r="0.9" fill="#6066b0"/></svg>
<div class="a" style="left:32px;top:634.51px;width:963px;height:29.0px;background:#f9f9fb;border-top:1px solid #f1f2f6"></div>
<div class="cb" style="left:45.6px;top:641.71px;width:14px;height:14px"></div>
<div class="a" style="left:68px;top:644.51px;font-size:10.45px;line-height:10.45px;color:#4155ab;font-weight:bold;">whatswebq.icu</div>
<div class="a" style="left:221px;top:643.71px;font-size:10.8px;line-height:10.8px;color:#333;font-weight:normal;">9</div>
<svg class="a" style="left:271.2px;top:640.51px" width="82" height="17" viewBox="0 0 82 17"><rect x="0" y="0" width="82" height="17" fill="#ededed"/><rect x="3.0" y="0" width="0.7" height="17" fill="#f5f5f5"/><rect x="7.1" y="0" width="0.7" height="17" fill="#f5f5f5"/><rect x="11.2" y="0" width="0.7" height="17" fill="#f5f5f5"/><rect x="15.299999999999999" y="0" width="0.7" height="17" fill="#f5f5f5"/><rect x="19.4" y="0" width="0.7" height="17" fill="#f5f5f5"/><rect x="23.5" y="0" width="0.7" height="17" fill="#f5f5f5"/><rect x="27.599999999999998" y="0" width="0.7" height="17" fill="#f5f5f5"/><rect x="31.699999999999996" y="0" width="0.7" height="17" fill="#f5f5f5"/><rect x="35.8" y="0" width="0.7" height="17" fill="#f5f5f5"/><rect x="39.9" y="0" width="0.7" height="17" fill="#f5f5f5"/><rect x="44.0" y="0" width="0.7" height="17" fill="#f5f5f5"/><rect x="48.099999999999994" y="0" width="0.7" height="17" fill="#f5f5f5"/><rect x="52.199999999999996" y="0" width="0.7" height="17" fill="#f5f5f5"/><rect x="56.3" y="0" width="0.7" height="17" fill="#f5f5f5"/><rect x="60.39999999999999" y="0" width="0.7" height="17" fill="#f5f5f5"/><rect x="64.5" y="0" width="0.7" height="17" fill="#f5f5f5"/><rect x="68.6" y="0" width="0.7" height="17" fill="#f5f5f5"/><rect x="72.69999999999999" y="0" width="0.7" height="17" fill="#f5f5f5"/><rect x="76.8" y="0" width="0.7" height="17" fill="#f5f5f5"/><rect x="80.89999999999999" y="0" width="0.7" height="17" fill="#f5f5f5"/><rect x="0" y="16" width="82" height="1" fill="#e2e2e2"/></svg>
<div class="a" style="left:375px;top:644.51px;font-size:10.2px;line-height:10.2px;color:#333"><span style="color:#999">--</span></div>
<div class="a" style="left:649.4px;top:643.71px;font-size:10.8px;line-height:10.8px;color:#4a63a8;font-weight:normal;">207494</div>
<div class="a" style="left:703.7px;top:643.71px;font-size:10.8px;line-height:10.8px;color:#333;font-weight:normal;">2025-10-08</div>
<div class="a" style="left:789.2px;top:643.71px;font-size:10.8px;line-height:10.8px;color:#333;font-weight:normal;">$3.99</div>
<div class="a" style="left:865px;top:644.01px;font-size:10.4px;line-height:10.4px;color:#5266ae;font-weight:normal;">关注</div>
<div class="a" style="left:915px;top:638.51px;width:42px;height:20.0px;border:1px solid #7783b0;background:#fff"></div>
<div class="a" style="left:926px;top:643.51px;font-size:10.4px;line-height:10.4px;color:#4a63a8;font-weight:normal;">购买</div>
<div class="a" style="left:962px;top:638.51px;width:20px;height:20.0px;border:1px solid #7783b0;background:#fff"></div>
<svg class="a" style="left:966px;top:643.01px" width="12" height="11" viewBox="0 0 12 11"><path d="M0.6 0.8 L2 1.2 L3 7.2 H9.8 L10.8 2.8 H2.6" stroke="#6066b0" stroke-width="1.1" fill="none" stroke-linejoin="round"/><circle cx="4" cy="9.5" r="0.9" fill="#6066b0"/><circle cx="8.8" cy="9.5" r="0.9" fill="#6066b0"/></svg>
<div class="a" style="left:32px;top:663.44px;width:963px;height:29.0px;background:#fff;border-top:1px solid #f1f2f6"></div>
<div class="cb" style="left:45.6px;top:670.6400000000001px;width:14px;height:14px"></div>
<div class="a" style="left:68px;top:673.44px;font-size:10.45px;line-height:10.45px;color:#4155ab;font-weight:bold;">bgmbcp.cn</div>
<div class="a" style="left:221px;top:672.6400000000001px;font-size:10.8px;line-height:10.8px;color:#333;font-weight:normal;">6</div>
<svg class="a" style="left:271.2px;top:669.44px" width="82" height="17" viewBox="0 0 82 17"><rect x="0" y="0" width="82" height="17" fill="#ededed"/><rect x="3.0" y="0" width="0.7" height="17" fill="#f5f5f5"/><rect x="7.1" y="0" width="0.7" height="17" fill="#f5f5f5"/><rect x="11.2" y="0" width="0.7" height="17" fill="#f5f5f5"/><rect x="15.299999999999999" y="0" width="0.7" height="17" fill="#f5f5f5"/><rect x="19.4" y="0" width="0.7" height="17" fill="#f5f5f5"/><rect x="23.5" y="0" width="0.7" height="17" fill="#f5f5f5"/><rect x="27.599999999999998" y="0" width="0.7" height="17" fill="#f5f5f5"/><rect x="31.699999999999996" y="0" width="0.7" height="17" fill="#f5f5f5"/><rect x="35.8" y="0" width="0.7" height="17" fill="#f5f5f5"/><rect x="39.9" y="0" width="0.7" height="17" fill="#f5f5f5"/><rect x="44.0" y="0" width="0.7" height="17" fill="#f5f5f5"/><rect x="48.099999999999994" y="0" width="0.7" height="17" fill="#f5f5f5"/><rect x="52.199999999999996" y="0" width="0.7" height="17" fill="#f5f5f5"/><rect x="56.3" y="0" width="0.7" height="17" fill="#f5f5f5"/><rect x="60.39999999999999" y="0" width="0.7" height="17" fill="#f5f5f5"/><rect x="64.5" y="0" width="0.7" height="17" fill="#f5f5f5"/><rect x="68.6" y="0" width="0.7" height="17" fill="#f5f5f5"/><rect x="72.69999999999999" y="0" width="0.7" height="17" fill="#f5f5f5"/><rect x="76.8" y="0" width="0.7" height="17" fill="#f5f5f5"/><rect x="80.89999999999999" y="0" width="0.7" height="17" fill="#f5f5f5"/><rect x="0" y="16" width="82" height="1" fill="#e2e2e2"/></svg>
<div class="a" style="left:375px;top:673.44px;font-size:10.2px;line-height:10.2px;color:#333">个人注册3年<span class="cm">,</span>无建站历史<i>|</i>Sg收录1</div>
<div class="a" style="left:649.4px;top:672.6400000000001px;font-size:10.8px;line-height:10.8px;color:#4a63a8;font-weight:normal;">12286</div>
<div class="a" style="left:703.7px;top:672.6400000000001px;font-size:10.8px;line-height:10.8px;color:#333;font-weight:normal;">2025-04-14</div>
<div class="a" style="left:789.2px;top:672.6400000000001px;font-size:10.8px;line-height:10.8px;color:#c0304a;font-weight:normal;">$120.00</div>
<div class="a" style="left:865px;top:672.94px;font-size:10.4px;line-height:10.4px;color:#5266ae;font-weight:normal;">关注</div>
<div class="a" style="left:915px;top:667.44px;width:42px;height:20.0px;border:1px solid #7783b0;background:#fff"></div>
<div class="a" style="left:926px;top:672.44px;font-size:10.4px;line-height:10.4px;color:#4a63a8;font-weight:normal;">购买</div>
<div class="a" style="left:962px;top:667.44px;width:20px;height:20.0px;border:1px solid #7783b0;background:#fff"></div>
<svg class="a" style="left:966px;top:671.94px" width="12" height="11" viewBox="0 0 12 11"><path d="M0.6 0.8 L2 1.2 L3 7.2 H9.8 L10.8 2.8 H2.6" stroke="#6066b0" stroke-width="1.1" fill="none" stroke-linejoin="round"/><circle cx="4" cy="9.5" r="0.9" fill="#6066b0"/><circle cx="8.8" cy="9.5" r="0.9" fill="#6066b0"/></svg>
<div class="a" style="left:32px;top:692.37px;width:963px;height:29.0px;background:#f9f9fb;border-top:1px solid #f1f2f6"></div>
<div class="a" style="left:32px;top:399px;width:1px;height:298px;background:#eceef3"></div>
<div class="a" style="left:994px;top:399px;width:1px;height:298px;background:#eceef3"></div>
</body></html>
